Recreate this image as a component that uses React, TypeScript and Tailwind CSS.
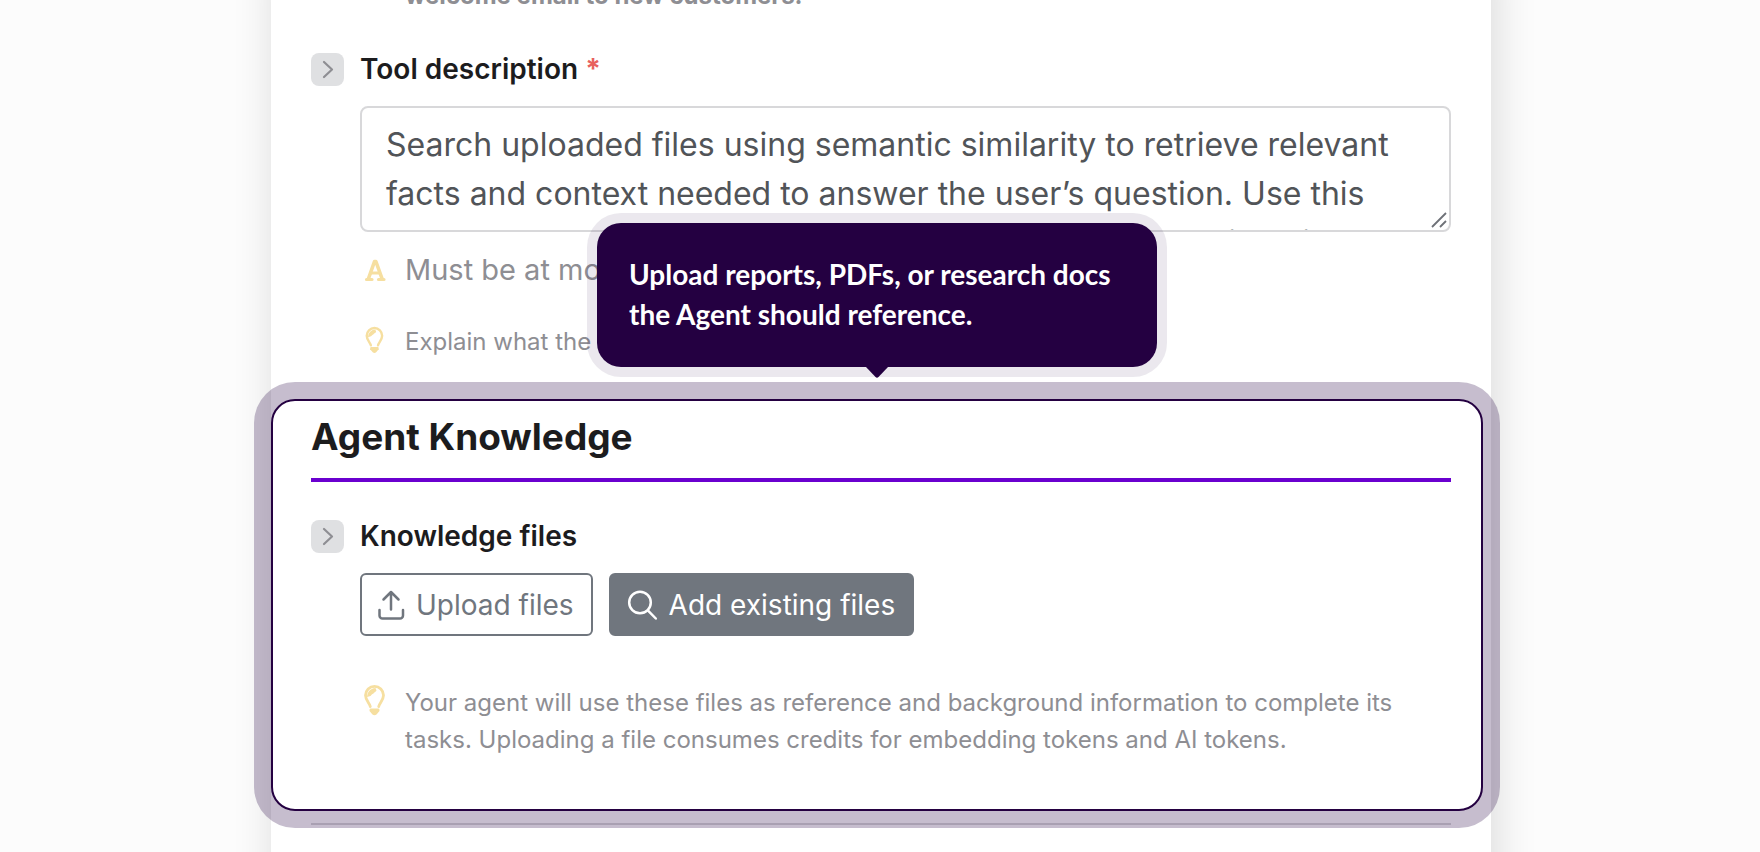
import type { ReactNode } from "react";

function ChevronButton({ label }: { label: string }) {
  return (
    <button
      type="button"
      aria-label={label}
      className="flex size-[33px] shrink-0 items-center justify-center rounded-lg bg-[#dfe0e2] text-[#8e8e93]"
    >
      <svg viewBox="0 0 33 33" className="size-full" fill="none" stroke="currentColor" strokeWidth="2.200" strokeLinecap="round" strokeLinejoin="round">
        <path d="M13 9l8 7.500-8 7.500" />
      </svg>
    </button>
  );
}

function BulbIcon({ small = false }: { small?: boolean }) {
  return (
    <span className="flex h-9 w-7 shrink-0 items-center justify-center">
      <svg viewBox="0 0 28 36" className={small ? "h-[31px] w-6" : "h-9 w-7"} fill="none" aria-hidden="true">
        <path
          d="M10.300 22.500C9.800 19.500 5.500 16.500 5.500 11.300a9 9 0 0 1 18 0c0 5.200-4.300 8.200-4.800 11.200"
          stroke="#f6dfa0"
          strokeWidth="2.800"
          strokeLinecap="round"
        />
        <path d="M7 13c.5-5 3-8.500 8.500-9l1 2.500c-1 2-2.500 1.500-3 3-1.500.5-2 1.500-3 2.500z" fill="#f6dfa0" />
        <path d="M10.500 24.500h8q1.300 0 1 2.500l-3 3.500q-2 1.600-4 0l-3-3.500q-.3-2.500 1-2.500z" fill="#f6dfa0" />
      </svg>
    </span>
  );
}

function LetterIcon() {
  return (
    <svg viewBox="0 0 28 36" className="h-9 w-7 shrink-0" fill="none" stroke="#f6dfa0" aria-hidden="true">
      <path d="M8.500 26.500L14.500 9.500h1.400L22 26.500" strokeWidth="3.600" strokeLinejoin="round" />
      <path d="M10 21h10" strokeWidth="3" />
      <path d="M6.500 27.500h5.500M18.500 27.500h5.500" strokeWidth="3.200" strokeLinecap="round" />
    </svg>
  );
}

function UploadIcon() {
  return (
    <svg viewBox="0 0 28 32" className="h-8 w-7 shrink-0" fill="none" stroke="currentColor" strokeWidth="2.500" strokeLinecap="round" strokeLinejoin="round" aria-hidden="true">
      <path d="M14 20.500V3M6.500 10.500L14 3l7.500 7.500" />
      <path d="M2.500 21v5.500a3 3 0 0 0 3 3h17.500a3 3 0 0 0 3-3V21" />
    </svg>
  );
}

function SearchIcon() {
  return (
    <svg viewBox="0 0 32 32" className="size-8 shrink-0" fill="none" stroke="currentColor" strokeWidth="2.500" strokeLinecap="round" aria-hidden="true">
      <circle cx="14" cy="13.500" r="10.800" />
      <path d="M21.800 21.300l8 8.200" />
    </svg>
  );
}

function Hint({ icon, children }: { icon: ReactNode; children: ReactNode }) {
  return (
    <div className="flex items-start gap-[17px] pl-[49px] text-2xl leading-[37px] text-[#8e8e93]">
      {icon}
      <p>{children}</p>
    </div>
  );
}

export default function App() {
  return (
    <main className="h-screen overflow-hidden bg-[#fcfcfc] pl-0.5 font-['Inter','Liberation_Sans',sans-serif] text-[#1c1c1e]">
      <div className="mx-auto -mt-10 min-h-[120vh] w-full max-w-[1220px] bg-white pt-[18px] shadow-[4px_0_40px_rgba(0,0,0,0.14)]">
        <div className="px-10">
          <p className="pl-[94px] text-2xl font-bold leading-9 text-[#8e8e93]">welcome email to new customers.</p>

          <div className="mt-[35px] flex items-center gap-4">
            <ChevronButton label="Collapse tool description" />
            <label htmlFor="tool-description" className="text-[28px] font-semibold leading-10">
              Tool description <span className="font-bold text-[#e8615e]">*</span>
            </label>
          </div>
          <div className="relative mt-[17px] ml-[49px]">
            <textarea
              id="tool-description"
              className="block h-[126px] w-full resize-none overflow-hidden rounded-lg border-2 border-[#d8d8da] bg-white px-6 py-3 text-[32px] leading-[49px] text-[#515458]"
              defaultValue="Search uploaded files using semantic similarity to retrieve relevant facts and context needed to answer the user’s question. Use this tool when the answer may depend on information contained in the uploaded files."
            />
            <svg viewBox="0 0 16 16" className="absolute right-1 bottom-1 size-4" stroke="#6e7177" strokeWidth="1.800" aria-hidden="true">
              <path d="M1 15L15 1M9 15l6-6" />
            </svg>
          </div>

          <div className="mt-[17px] flex items-center gap-[17px] pl-[49px] text-[29px] leading-[42px] text-[#8e8e93]">
            <LetterIcon />
            <p>Must be at most 1024 characters.</p>
          </div>
          <div className="mt-8">
            <Hint icon={<BulbIcon small />}>Explain what the tool does and when to use it.</Hint>
          </div>
        </div>

        <section className="relative z-10 mt-[39px] mr-2 rounded-3xl border-2 border-[#240041] bg-white pt-[11px] pr-[30px] pb-[51px] pl-[38px] shadow-[0_0_0_17px_rgba(36,0,65,0.26)]">
          <div
            role="tooltip"
            className="absolute bottom-full left-1/2 mb-[34px] w-[560px] -translate-x-1/2 rounded-3xl bg-[#240041] px-8 pt-[31px] pb-[33px] font-['Lato','Liberation_Sans',sans-serif] text-[28px] font-bold leading-10 text-white shadow-[0_0_0_10px_rgba(36,0,65,0.09)]"
          >
            Upload reports, PDFs, or research docs the Agent should reference.
            <svg viewBox="0 0 22 11" className="absolute top-full left-1/2 h-[11px] w-[22px] -translate-x-1/2" fill="#240041" aria-hidden="true">
              <path d="M0 0h22L12.500 10q-1.500 1.500-3 0z" />
            </svg>
          </div>

          <h2 className="border-b-4 border-[#6a00cf] pb-4 text-[37px] font-bold leading-[50px]">Agent Knowledge</h2>
          <div className="mt-[34px] flex items-center gap-4">
            <ChevronButton label="Collapse knowledge files" />
            <h3 className="text-[28px] font-semibold leading-10">Knowledge files</h3>
          </div>
          <div className="mt-[17px] flex flex-wrap gap-4 pl-[49px] text-[28px] leading-10">
            <button type="button" className="flex h-[63px] items-center gap-[11px] rounded-md border-2 border-[#70767e] pr-[17px] pl-[15px] text-[#70767e]">
              <UploadIcon />
              Upload files
            </button>
            <button type="button" className="flex h-[63px] items-center gap-[11px] rounded-md border-2 border-[#70767e] bg-[#70767e] pr-[17px] pl-[15px] text-white">
              <SearchIcon />
              Add existing files
            </button>
          </div>
          <div className="mt-12">
            <Hint icon={<BulbIcon />}>
              Your agent will use these files as reference and background information to complete its tasks. Uploading a file consumes credits for embedding tokens and AI tokens.
            </Hint>
          </div>
        </section>

        <hr className="mx-10 mt-3 border-t-2 border-[#d8d8da]" />
      </div>
    </main>
  );
}
